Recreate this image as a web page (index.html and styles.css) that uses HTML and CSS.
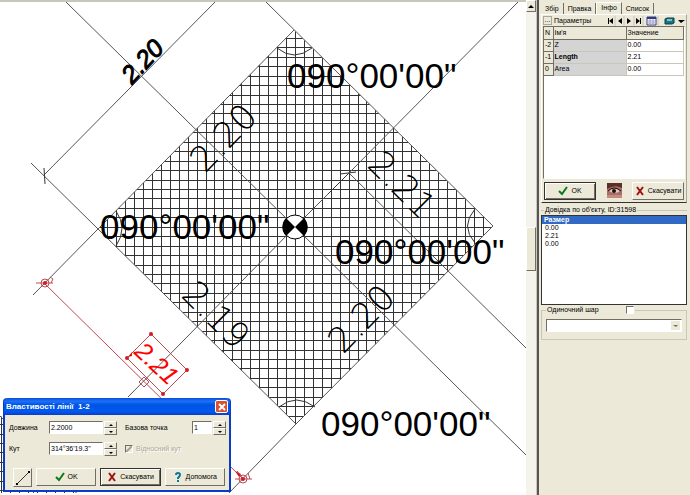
FILE: index.html
```html
<!DOCTYPE html>
<html lang="uk">
    <head>
        <title>Властивості лінії</title>
        <meta charset="utf-8">
        <link rel="stylesheet" href="styles.css">
    </head>

    <body>
        <main class="canvas">
            <svg class="drawing" width="100%" height="100%">
                <defs>
                    <clipPath id="plot">
                        <polygon points="294,30 493,226 296,424 98,229"/>
                    </clipPath>
                    <clipPath id="plot2">
                        <polygon points="0,415 85,500 0,500"/>
                    </clipPath>
                </defs>

                <!-- hatch -->
                <g class="hatch" clip-path="url(#plot)">
                    <path d="M107 30v394M116 30v394M125 30v394M134 30v394M143 30v394M152 30v394M161 30v394M170 30v394M179 30v394M188 30v394M197 30v394M206 30v394M214 30v394M223 30v394M232 30v394M241 30v394M250 30v394M259 30v394M268 30v394M277 30v394M286 30v394M295 30v394M304 30v394M313 30v394M322 30v394M331 30v394M340 30v394M349 30v394M358 30v394M366 30v394M375 30v394M384 30v394M393 30v394M402 30v394M411 30v394M420 30v394M429 30v394M438 30v394M447 30v394M456 30v394M465 30v394M474 30v394M483 30v394"/>
                    <path d="M98 38h396M98 47h396M98 57h396M98 66h396M98 76h396M98 85h396M98 95h396M98 104h396M98 113h396M98 123h396M98 132h396M98 142h396M98 151h396M98 161h396M98 170h396M98 180h396M98 189h396M98 198h396M98 208h396M98 217h396M98 227h396M98 236h396M98 246h396M98 255h396M98 265h396M98 274h396M98 283h396M98 293h396M98 302h396M98 312h396M98 321h396M98 331h396M98 340h396M98 350h396M98 359h396M98 368h396M98 378h396M98 387h396M98 397h396M98 406h396M98 416h396"/>
                </g>
                <g class="hatch" clip-path="url(#plot2)">
                    <path d="M1 410v90M10 480v20M19 480v20M28 480v20M37 480v20M46 480v20M55 480v20M64 480v20M73 480v20"/>
                    <path d="M0 424h5M0 434h5M0 443h5M0 452h5M0 462h5M0 471h5M0 481h5M0 490h5"/>
                </g>

                <!-- construction lines -->
                <g class="line">
                    <path d="M66 2L295 227L526 455"/>
                    <path d="M215 2L44 175"/>
                    <path d="M31 163L98 229L296 424"/>
                    <path d="M33 295L98 229L294 30"/>
                    <path d="M266 2L493 226L296 424L228 494"/>
                    <path d="M518 2L349 173L295 227L128 397"/>
                    <path d="M349 173L526 348"/>
                    <path d="M0 416L4 420M31 495L36 490M73 490L79 495"/>
                </g>
                <g class="arc">
                    <path d="M277 48Q294 62 312 48"/>
                    <path d="M475 209Q460 226 475 243"/>
                    <path d="M279 407Q296 393 315 407"/>
                    <path d="M116 211Q128 228 116 246"/>
                    <path d="M44 168L45 184M340 174L356 172M349 173L328 194"/>
                </g>

                <!-- centre mark -->
                <circle class="mark" cx="295" cy="227" r="12"/>
                <path d="M295 227L286 218A13 13 0 0 0 286 236ZM295 227L304 218A13 13 0 0 1 304 236Z"/>

                <g class="angle">
                    <text x="287" y="88">090°00'00"</text>
                    <text x="100" y="239">090°00'00"</text>
                    <text x="335" y="264">090°00'00"</text>
                    <text x="321" y="436">090°00'00"</text>
                </g>
                <g class="size">
                    <text transform="translate(205 174) rotate(-46)">2.20</text>
                    <text transform="translate(343 355) rotate(-46)">2.20</text>
                    <text transform="translate(366 166) rotate(45)">2.21</text>
                    <text transform="translate(180 296) rotate(45)">2.19</text>
                </g>
                <text class="dim" transform="translate(132 85) rotate(-47)">2.20</text>

                <!-- selected line -->
                <g class="picked">
                    <path d="M44 283L243 479M36 283h17M235 479h17M237 471L243 479"/>
                    <path d="M151 334L187 370L163 394L127 358Z"/>
                    <path d="M144 377L149 382L144 387L139 382Z"/>
                    <circle cx="45" cy="283" r="4"/>
                    <circle cx="243" cy="479" r="4"/>
                    <path d="M50 277l3 2l-2 4M248 473l2 6"/>
                </g>
                <g class="grip">
                    <circle cx="45" cy="283" r="2"/>
                    <circle cx="243" cy="479" r="2"/>
                    <circle cx="151" cy="334" r="2"/>
                    <circle cx="187" cy="370" r="2"/>
                    <circle cx="163" cy="394" r="2"/>
                    <circle cx="127" cy="358" r="2"/>
                    <path d="M128 357l4-5v4zM235 471l6 3l-2 3z"/>
                </g>
                <text class="dim red" transform="translate(133 353) rotate(43)">2.21</text>
            </svg>

            <form class="dialog">
                <header class="title">
                    <h1>Властивості лінії&nbsp; 1-2</h1>
                    <button type="button" class="close" aria-label="Закрити">
                        <svg width="8" height="8"><path d="M1 1l6 6M7 1l-6 6"/></svg>
                    </button>
                </header>
                <div class="fields">
                    <label for="len">Довжина</label>
                    <div class="spin">
                        <input id="len" type="text" value="2.2000">
                        <span class="arrows">
                            <button type="button" aria-label="Більше"><svg width="4" height="2"><path d="M0 2l2-2l2 2z"/></svg></button>
                            <button type="button" aria-label="Менше"><svg width="4" height="2"><path d="M0 0h4l-2 2z"/></svg></button>
                        </span>
                    </div>
                    <label for="base">Базова точка</label>
                    <div class="spin">
                        <input id="base" type="text" value="1">
                        <span class="arrows">
                            <button type="button" aria-label="Більше"><svg width="4" height="2"><path d="M0 2l2-2l2 2z"/></svg></button>
                            <button type="button" aria-label="Менше"><svg width="4" height="2"><path d="M0 0h4l-2 2z"/></svg></button>
                        </span>
                    </div>
                    <label for="ang">Кут</label>
                    <div class="spin">
                        <input id="ang" type="text" value="314°36'19.3''">
                        <span class="arrows">
                            <button type="button" aria-label="Більше"><svg width="4" height="2"><path d="M0 2l2-2l2 2z"/></svg></button>
                            <button type="button" aria-label="Менше"><svg width="4" height="2"><path d="M0 0h4l-2 2z"/></svg></button>
                        </span>
                    </div>
                    <label class="relative"><input type="checkbox" class="check" checked disabled>Відносний кут</label>
                </div>
                <div class="actions">
                    <button type="button" class="btn pick" aria-label="Лінія">
                        <svg width="16" height="16"><path class="thin" d="M2 14L14 2"/><path d="M1 13h2v2h-2zM13 1h2v2h-2z"/></svg>
                    </button>
                    <button type="button" class="btn"><svg width="10" height="10"><path class="ok" d="M1 5l3 3l5-7"/></svg>OK</button>
                    <button type="button" class="btn default"><svg width="10" height="10"><path class="no" d="M2 1l6 8M8 1l-6 8"/></svg>Скасувати</button>
                    <button type="button" class="btn"><svg width="10" height="10"><path class="help" d="M3 3q0-2 2-2t2 2q0 1-2 3v1M5 8v2"/></svg>Допомога</button>
                </div>
            </form>
        </main>

        <div class="scroll">
            <button type="button" aria-label="Вгору"><svg width="6" height="3"><path d="M0 3l3-3l3 3z"/></svg></button>
            <div class="thumb"></div>
        </div>

        <aside class="panel">
            <nav class="tabs">
                <button type="button">Збір</button>
                <button type="button">Правка</button>
                <button type="button" class="active">Інфо</button>
                <button type="button">Список</button>
            </nav>

            <section class="page">
                <div class="bar">
                    <span class="dots">...</span>
                    <h2>Параметры</h2>
                    <svg width="78" height="10">
                        <path d="M1 2h1v6h-1zM6 2v6l-4-3zM15 2v6l-4-3zM20 2v6l4-3zM29 2v6l4-3zM33 2h1v6h-1zM71 4h7l-4 3z"/>
                        <path class="cut" d="M8 0v10M17 0v10M27 0v10M36 0v10M51 0v10"/>
                        <path class="tbl" d="M40 1h9v8h-9z"/>
                        <path class="tblhead" d="M40 1h9v2h-9z"/>
                        <path class="tblgrid" d="M43 3v6M46 3v6M40 5h9M40 7h9"/>
                        <path class="book" d="M58 3l2-1h7v5l-2 1h-7z"/>
                        <path class="bookline" d="M60 4h5"/>
                    </svg>
                </div>
                <div class="gridbox">
                    <table>
                        <tr><th class="n">N</th><th class="name">Ім'я</th><th>Значение</th></tr>
                        <tr><th>-2</th><td class="key">Z</td><td>0.00</td></tr>
                        <tr><th>-1</th><td class="key"><b>Length</b></td><td>2.21</td></tr>
                        <tr><th>0</th><td class="key">Area</td><td>0.00</td></tr>
                    </table>
                </div>
                <div class="confirm">
                    <button type="button" class="btn default"><svg width="10" height="10"><path class="ok" d="M1 5l3 3l5-7"/></svg>OK</button>
                    <svg width="15" height="15">
                        <rect width="15" height="15" fill="#a56f66"/>
                        <path d="M0 0h15v5q-7-4-15 1z" fill="#5b2d2b"/>
                        <path d="M2 8q5-5 11 0q-5 4-11 0z" fill="#e3c9c0"/>
                        <path d="M1 8q6-6 13 0" fill="none" stroke="#1c0d0d"/>
                        <circle cx="7" cy="8" r="2" fill="#1c0d0d"/>
                        <path d="M0 12h15v3h-15z" fill="#c58b80"/>
                    </svg>
                    <button type="button" class="btn"><svg width="10" height="10"><path class="no" d="M2 1l6 8M8 1l-6 8"/></svg>Скасувати</button>
                </div>
            </section>

            <fieldset class="info">
                <legend>Довідка по об'єкту, ID:31598</legend>
                <ul>
                    <li class="sel">Размер</li>
                    <li>0.00</li>
                    <li>2.21</li>
                    <li>0.00</li>
                </ul>
            </fieldset>

            <fieldset class="layer">
                <legend><label class="single">Одиночний шар<input type="checkbox" class="check"></label></legend>
                <div class="combo">
                    <select aria-label="Шар" disabled><option></option></select>
                    <svg width="9" height="9"><path d="M2 4h5l-2 2z"/></svg>
                </div>
            </fieldset>
        </aside>
    </body>
</html>
```

FILE: styles.css
```css
* {
    box-sizing: border-box;
    font-family: "Liberation Sans", sans-serif;
}
body {
    margin: 0;
    display: flex;
    min-height: 100vh;
    background: #ece9d8;
    font-size: 7px;
    line-height: 10px;
    color: #000;
}
h1, h2 {
    margin: 0;
    font-size: 7px;
    font-weight: normal;
}
button, input, select {
    margin: 0;
    padding: 0;
    font-size: 7px;
    line-height: 10px;
    color: #000;
    border-radius: 0;
}
button {
    background: #ece9d8;
    border: 1px solid;
    border-color: #fff #716f64 #716f64 #fff;
}

/* drawing */
.canvas {
    flex: 1;
    position: relative;
    background: #fff;
    border-top: 2px solid #c9c7ba;
    overflow: hidden;
}
.drawing {
    position: absolute;
    top: -2px;
    left: 0;
}
.hatch {
    fill: none;
    stroke: #333;
    shape-rendering: crispEdges;
}
.line {
    fill: none;
    stroke: #555;
}
.arc {
    fill: none;
    stroke: #333;
}
.mark {
    fill: #fff;
    stroke: #000;
}
.angle text {
    font-size: 35px;
}
.size text {
    font-family: "DejaVu Sans", sans-serif;
    font-weight: 200;
    font-size: 35px;
}
.dim {
    font-size: 25px;
    font-style: italic;
    stroke: #000;
}
.red {
    fill: #f00;
    stroke: none;
}
.picked {
    fill: none;
    stroke: #c04a54;
}
.grip {
    fill: #d01c24;
}

/* dialog */
.dialog {
    position: absolute;
    left: 3px;
    bottom: 3px;
    width: 228px;
    border: 2px solid #0a3cc8;
    border-top: 0;
    border-radius: 4px 4px 0 0;
    background: #ece9d8;
}
.title {
    display: flex;
    align-items: center;
    justify-content: space-between;
    height: 17px;
    margin: 0 -1px;
    padding: 0 2px;
    border-radius: 4px 4px 0 0;
    background: linear-gradient(#0a50d8, #1c70f8 20%, #0054e3 40%, #0058ee 80%, #0a3cc8);
}
.title h1 {
    font-size: 8px;
    font-weight: bold;
    color: #fff;
}
.close {
    display: flex;
    align-items: center;
    justify-content: center;
    width: 13px;
    height: 13px;
    border: 1px solid #fff;
    border-radius: 2px;
    background: #dc5030;
}
.close path {
    stroke: #fff;
    stroke-width: 2;
}
.fields {
    display: grid;
    grid-template-columns: 40px 76px 67px 34px;
    row-gap: 7px;
    align-items: center;
    padding: 6px 3px 0 4px;
}
.spin {
    display: flex;
    gap: 1px;
    height: 14px;
}
.spin input {
    flex: 1;
    min-width: 0;
    height: 13px;
    padding: 0 1px;
    border: 1px solid;
    border-color: #716f64 #fff #fff #716f64;
    background: #fff;
}
.fields > .spin:nth-child(2), .fields > .spin:nth-child(6) {
    width: 68px;
}
.arrows {
    display: flex;
    flex-direction: column;
    width: 13px;
}
.arrows button {
    display: flex;
    align-items: center;
    justify-content: center;
    height: 7px;
}
.relative {
    grid-column: span 2;
    display: flex;
    align-items: center;
    gap: 3px;
    color: #aca899;
    text-shadow: 1px 1px #fff;
}
.check {
    appearance: none;
    width: 8px;
    height: 8px;
    border: 1px solid;
    border-color: #716f64 #fff #fff #716f64;
    background: #fff;
}
.check:checked {
    background: linear-gradient(135deg, #ece9d8 40%, #aca899 40%, #aca899 60%, #ece9d8 60%);
}
.actions {
    display: flex;
    align-items: flex-start;
    gap: 4px;
    padding: 12px 4px 3px 8px;
}
.btn {
    flex: 1;
    display: flex;
    align-items: center;
    justify-content: center;
    gap: 3px;
    height: 18px;
}
.btn svg {
    fill: none;
}
.default {
    border: 1px solid #333;
    box-shadow: inset 1px 1px #fff, inset -1px -1px #716f64;
}
.pick {
    flex: none;
    width: 19px;
    height: 19px;
}
.btn.pick svg {
    fill: #000;
}
.thin {
    stroke: #333;
}
.ok {
    stroke: #0a7a1c;
    stroke-width: 2;
}
.no {
    stroke: #a01010;
    stroke-width: 2;
}
.help {
    stroke: #0a7a9c;
    stroke-width: 2;
}

/* scroll bar */
.scroll {
    width: 11px;
    background: #f4f3ec;
    border-right: 1px solid #c9c7ba;
}
.scroll button {
    display: flex;
    align-items: center;
    justify-content: center;
    width: 10px;
    height: 12px;
}
.thumb {
    height: 44px;
    margin-top: 215px;
    background: #ece9d8;
    border: 1px solid;
    border-color: #fff #716f64 #716f64 #fff;
}

/* side panel */
.panel {
    width: 153px;
    padding: 2px 3px 0 2px;
    border-left: 2px solid #555;
    display: flex;
    flex-direction: column;
}
.tabs {
    display: flex;
    align-items: flex-end;
    height: 12px;
}
.tabs button {
    height: 11px;
    padding: 0 4px;
    border-width: 0 1px 0 0;
}
.tabs .active {
    height: 12px;
    padding-bottom: 2px;
    border-width: 1px 1px 0 1px;
}
.page {
    border: 1px solid;
    border-color: #fff #aca899 #333 #fff;
    padding: 0 1px;
}
.bar {
    display: flex;
    align-items: center;
    height: 11px;
}
.bar h2 {
    flex: 1;
    padding-left: 2px;
}
.dots {
    width: 9px;
    height: 9px;
    line-height: 6px;
    text-align: center;
    border: 1px solid #aca899;
}
.cut {
    stroke: #c9c7ba;
}
.tbl {
    fill: #fff;
    stroke: #333a80;
}
.tblhead {
    fill: #333a80;
}
.tblgrid {
    stroke: #a0a0c8;
}
.book {
    fill: #107888;
    stroke: #0c3c48;
}
.bookline {
    stroke: #fff;
}
.gridbox {
    height: 153px;
    background: #fff;
    border: 1px solid;
    border-color: #716f64 #fff #fff #716f64;
}
table {
    width: 100%;
    border-collapse: collapse;
    table-layout: fixed;
}
th, td {
    height: 12px;
    padding: 0 1px;
    font-weight: normal;
    text-align: left;
    border: 1px solid #c9c7ba;
    border-width: 0 1px 1px 0;
}
th {
    background: #ece9d8;
    border-color: #716f64;
}
.n {
    width: 9px;
}
.name {
    width: 73px;
}
.key {
    background: #d4d4d4;
}
.confirm {
    display: flex;
    align-items: center;
    justify-content: space-between;
    height: 23px;
    padding: 0 1px;
}
.confirm .btn {
    flex: none;
    width: 52px;
}
fieldset {
    min-width: 0;
    margin: 0;
    padding: 0;
    border: 1px solid #c9c7ba;
}
legend {
    margin-left: 3px;
    padding: 0 1px;
}
.info {
    margin-top: 2px;
    border-width: 1px 0 0;
}
.info ul {
    height: 90px;
    margin: 0;
    padding: 0;
    list-style: none;
    line-height: 8px;
    background: #fff;
    border: 1px solid #333;
}
.info li {
    padding-left: 3px;
}
.info .sel {
    padding-left: 2px;
    background: #316ac5;
    color: #fff;
    font-weight: bold;
}
.layer {
    padding: 0 4px 7px;
}
.layer legend {
    margin-left: 0;
}
.single {
    display: flex;
    align-items: center;
    gap: 27px;
}
.combo {
    display: flex;
    align-items: center;
    height: 13px;
    margin-top: 4px;
    padding: 1px;
    background: #fff;
    border: 1px solid;
    border-color: #716f64 #fff #fff #716f64;
}
.combo select {
    flex: 1;
    appearance: none;
    border: 0;
    height: 9px;
    background: #fff;
}
.combo svg {
    background: #ece9d8;
    fill: #716f64;
}
```
